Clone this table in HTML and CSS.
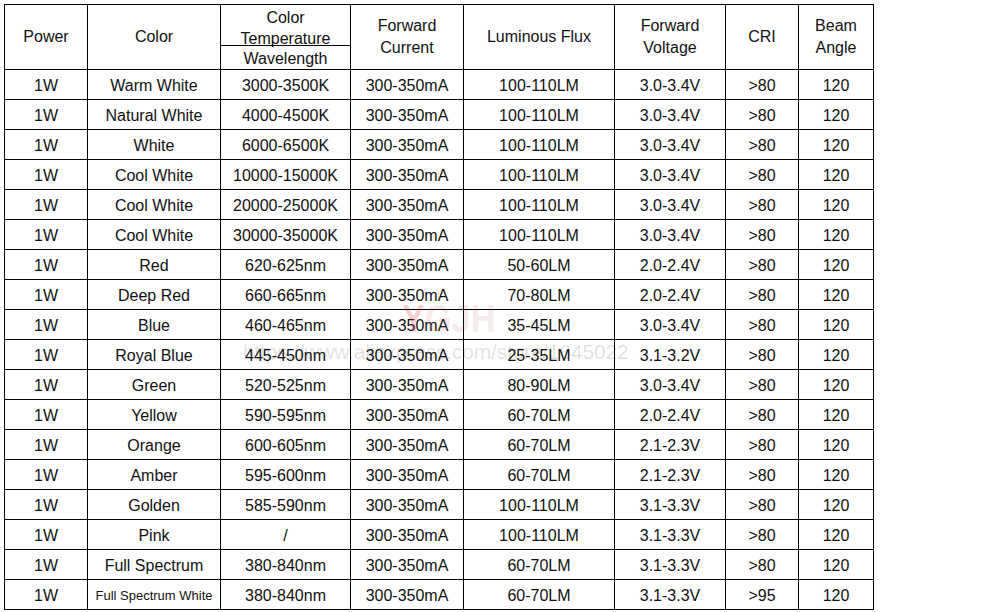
FILE: index.html
```html
<!DOCTYPE html>
<html>
<head>
<meta charset="utf-8">
<link rel="stylesheet" href="styles.css">
</head>
<body>
<div class="wrap">
<table class="spec">
  <colgroup>
    <col class="c1"><col class="c2"><col class="c3"><col class="c4"><col class="c5"><col class="c6"><col class="c7"><col class="c8">
  </colgroup>
  <thead>
    <tr class="h1">
      <th rowspan="2">Power</th>
      <th rowspan="2">Color</th>
      <th class="temp"><div class="temp-in">Color<br>Temperature</div></th>
      <th rowspan="2">Forward<br>Current</th>
      <th rowspan="2">Luminous Flux</th>
      <th rowspan="2">Forward<br>Voltage</th>
      <th rowspan="2">CRI</th>
      <th rowspan="2">Beam<br>Angle</th>
    </tr>
    <tr class="h2">
      <th>Wavelength</th>
    </tr>
  </thead>
  <tbody>
    <tr><td>1W</td><td>Warm White</td><td>3000-3500K</td><td>300-350mA</td><td>100-110LM</td><td>3.0-3.4V</td><td>&gt;80</td><td>120</td></tr>
    <tr><td>1W</td><td>Natural White</td><td>4000-4500K</td><td>300-350mA</td><td>100-110LM</td><td>3.0-3.4V</td><td>&gt;80</td><td>120</td></tr>
    <tr><td>1W</td><td>White</td><td>6000-6500K</td><td>300-350mA</td><td>100-110LM</td><td>3.0-3.4V</td><td>&gt;80</td><td>120</td></tr>
    <tr><td>1W</td><td>Cool White</td><td>10000-15000K</td><td>300-350mA</td><td>100-110LM</td><td>3.0-3.4V</td><td>&gt;80</td><td>120</td></tr>
    <tr><td>1W</td><td>Cool White</td><td>20000-25000K</td><td>300-350mA</td><td>100-110LM</td><td>3.0-3.4V</td><td>&gt;80</td><td>120</td></tr>
    <tr><td>1W</td><td>Cool White</td><td>30000-35000K</td><td>300-350mA</td><td>100-110LM</td><td>3.0-3.4V</td><td>&gt;80</td><td>120</td></tr>
    <tr><td>1W</td><td>Red</td><td>620-625nm</td><td>300-350mA</td><td>50-60LM</td><td>2.0-2.4V</td><td>&gt;80</td><td>120</td></tr>
    <tr><td>1W</td><td>Deep Red</td><td>660-665nm</td><td>300-350mA</td><td>70-80LM</td><td>2.0-2.4V</td><td>&gt;80</td><td>120</td></tr>
    <tr><td>1W</td><td>Blue</td><td>460-465nm</td><td>300-350mA</td><td>35-45LM</td><td>3.0-3.4V</td><td>&gt;80</td><td>120</td></tr>
    <tr><td>1W</td><td>Royal Blue</td><td>445-450nm</td><td>300-350mA</td><td>25-35LM</td><td>3.1-3.2V</td><td>&gt;80</td><td>120</td></tr>
    <tr><td>1W</td><td>Green</td><td>520-525nm</td><td>300-350mA</td><td>80-90LM</td><td>3.0-3.4V</td><td>&gt;80</td><td>120</td></tr>
    <tr><td>1W</td><td>Yellow</td><td>590-595nm</td><td>300-350mA</td><td>60-70LM</td><td>2.0-2.4V</td><td>&gt;80</td><td>120</td></tr>
    <tr><td>1W</td><td>Orange</td><td>600-605nm</td><td>300-350mA</td><td>60-70LM</td><td>2.1-2.3V</td><td>&gt;80</td><td>120</td></tr>
    <tr><td>1W</td><td>Amber</td><td>595-600nm</td><td>300-350mA</td><td>60-70LM</td><td>2.1-2.3V</td><td>&gt;80</td><td>120</td></tr>
    <tr><td>1W</td><td>Golden</td><td>585-590nm</td><td>300-350mA</td><td>100-110LM</td><td>3.1-3.3V</td><td>&gt;80</td><td>120</td></tr>
    <tr><td>1W</td><td>Pink</td><td>/</td><td>300-350mA</td><td>100-110LM</td><td>3.1-3.3V</td><td>&gt;80</td><td>120</td></tr>
    <tr><td>1W</td><td>Full Spectrum</td><td>380-840nm</td><td>300-350mA</td><td>60-70LM</td><td>3.1-3.3V</td><td>&gt;80</td><td>120</td></tr>
    <tr><td>1W</td><td class="small">Full Spectrum White</td><td>380-840nm</td><td>300-350mA</td><td>60-70LM</td><td>3.1-3.3V</td><td>&gt;95</td><td>120</td></tr>
  </tbody>
</table>
<div class="wm-logo"><span class="wm-y">Y</span><span class="wm-rest">GJH</span></div>
<div class="wm-url">https://www.aliexpress.com/store/1645022</div>
</div>
</body>
</html>
```

FILE: styles.css
```css
html, body {
  margin: 0;
  padding: 0;
  background: #fff;
}
.wrap {
  position: relative;
  padding: 4px 0 0 4px;
}
.spec {
  border-collapse: collapse;
  table-layout: fixed;
  width: 869px;
  font-family: "Liberation Sans", Arial, sans-serif;
  font-size: 16px;
  color: #111;
}
.c1 { width: 83px; }
.c2 { width: 133px; }
.c3 { width: 130px; }
.c4 { width: 113px; }
.c5 { width: 151px; }
.c6 { width: 111px; }
.c7 { width: 73px; }
.c8 { width: 75px; }
.spec th, .spec td {
  border: 1px solid #000;
  padding: 0;
  text-align: center;
  vertical-align: middle;
  font-weight: normal;
  white-space: nowrap;
}
.spec th {
  line-height: 22px;
}
.h1 { height: 40px; }
.h2 { height: 24px; }
.h2 th { line-height: 20px; padding-top: 2px; }
.spec th.temp {
  vertical-align: top;
  height: 40px;
  overflow: visible;
}
.temp-in {
  height: 40px;
  line-height: 21px;
  padding-top: 2px;
  box-sizing: border-box;
  overflow: visible;
}
.spec tbody tr { height: 30px; }
.spec td { padding-top: 2px; }
.spec td.small { font-size: 13px; }
.wm-logo {
  position: absolute;
  left: 402px;
  top: 297px;
  font-family: "Liberation Sans", Arial, sans-serif;
  font-weight: bold;
  font-size: 39px;
  transform: scaleX(0.88);
  transform-origin: left top;
  pointer-events: none;
}
.wm-y { color: rgba(210, 40, 40, 0.22); }
.wm-rest { color: rgba(170, 90, 90, 0.14); }
.wm-url {
  position: absolute;
  left: 243px;
  top: 340px;
  font-family: "Liberation Sans", Arial, sans-serif;
  font-size: 21px;
  letter-spacing: -0.2px;
  color: rgba(0, 0, 0, 0.13);
  white-space: nowrap;
  pointer-events: none;
}
```
